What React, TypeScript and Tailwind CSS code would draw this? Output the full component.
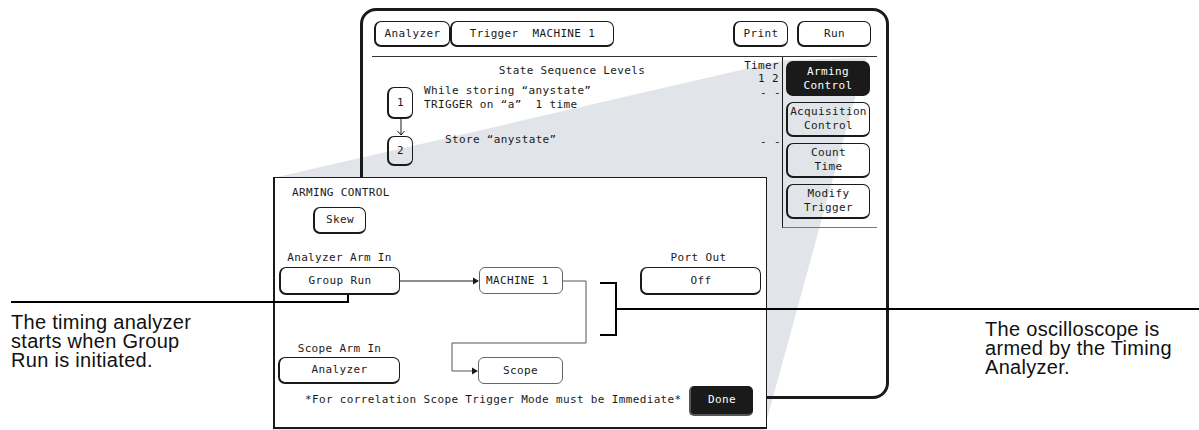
import type { ReactNode } from 'react';

const mono = "font-['DejaVu_Sans_Mono','Liberation_Mono',monospace] text-[11px] tracking-[0.35px] text-[#1a1a1a]";
const caption = "font-['Liberation_Sans',Arial,sans-serif] text-[#111] text-[20px] tracking-[0.3px] leading-[19px]";

// selectable softkey: thin top/right edge, heavy left/bottom "shadow" edge
function Key({ className, children }: { className: string; children: ReactNode }) {
  return (
    <div
      className={`flex items-center justify-center rounded-[7px] border border-[#1a1a1a] border-l-2 border-b-2 leading-[12px] text-center whitespace-pre ${className}`}
    >
      {children}
    </div>
  );
}

// non-selectable field
function Field({ className, children }: { className: string; children: ReactNode }) {
  return (
    <div className={`flex items-center rounded-[6px] border border-[#666] leading-[12px] ${className}`}>
      {children}
    </div>
  );
}

function Screen() {
  return (
    <div className={`absolute left-[360px] top-[8px] w-[529px] h-[391px] rounded-[16px] border-[3px] border-[#1a1a1a] ${mono}`}>
      {/* top menu row */}
      <div className="flex items-center pt-[10px] pl-[11px] pr-[15px]">
        <Key className="w-[76px] h-[26px] bg-white">Analyzer</Key>
        <Key className="w-[164px] h-[26px] bg-white">Trigger  MACHINE 1</Key>
        <Key className="ml-auto w-[55px] h-[26px] bg-white">Print</Key>
        <Key className="ml-[9px] w-[74px] h-[26px] bg-white">Run</Key>
      </div>
      <div className="mt-[9px] mx-[9px] border-t border-[#333]" />

      <div className="flex mx-[9px]">
        {/* sequence levels */}
        <div className="flex-1 flex flex-col">
          <div className="grid grid-cols-[1fr_auto_1fr]">
            <div />
            <div className="pt-[8px] mr-[10px] leading-[12px]">State Sequence Levels</div>
            <div className="justify-self-end pt-[2px] pr-[3px] text-right leading-[13px]">
              <div>Timer</div>
              <div>1 2</div>
            </div>
          </div>

          <div className="flex items-start pl-[15px] mt-[2px]">
            <Key className="w-[26px] h-[32px]">1</Key>
            <div className="ml-[11px] -mt-[3px] leading-[14px] whitespace-pre">
              <div>While storing “anystate”</div>
              <div>TRIGGER on “a”  1 time</div>
            </div>
            <div className="ml-auto pr-[1px] leading-[12px] whitespace-pre">- -</div>
          </div>

          <div className="pl-[24px] h-[17px]">
            <svg width="10" height="17" viewBox="0 0 10 17">
              <path d="M5 0 V16 M1.5 12 L5 16 L8.5 12" fill="none" stroke="#1a1a1a" strokeWidth="1" />
            </svg>
          </div>

          <div className="flex items-start pl-[15px]">
            <Key className="w-[26px] h-[30px]">2</Key>
            <div className="ml-[32px] -mt-[3px] leading-[14px] whitespace-pre">Store “anystate”</div>
            <div className="ml-auto pr-[1px] leading-[12px] whitespace-pre">- -</div>
          </div>
        </div>

        {/* softkey column */}
        <div className="w-[95px] flex flex-col gap-[6px] pt-[4px] pl-[3px] pb-[8px] border-l border-[#1a1a1a] border-b border-b-[#777]">
          <div className="w-[84px] h-[35px] flex flex-col items-center justify-center rounded-[7px] bg-[#1a1a1a] text-white leading-[14px]">
            <div>Arming</div>
            <div>Control</div>
          </div>
          <Key className="w-[84px] h-[35px] flex-col !leading-[14px]">
            <span>Acquisition</span>
            <span>Control</span>
          </Key>
          <Key className="w-[84px] h-[35px] flex-col !leading-[14px]">
            <span>Count</span>
            <span>Time</span>
          </Key>
          <Key className="w-[84px] h-[35px] flex-col !leading-[14px]">
            <span>Modify</span>
            <span>Trigger</span>
          </Key>
        </div>
      </div>
    </div>
  );
}

function ArmingPanel() {
  return (
    <div className={`absolute left-[273px] top-[177px] w-[494px] h-[252px] bg-white border border-[#1a1a1a] border-l-2 border-b-2 ${mono}`}>
      <div className="relative flex flex-col h-full">
        <div className="pl-[17px] pt-[9px] leading-[12px]">ARMING CONTROL</div>
        <Key className="ml-[38px] mt-[8px] w-[53px] h-[27px]">Skew</Key>

        <div className="flex mt-[18px] leading-[12px]">
          <div className="ml-[4px] w-[121px] text-center">Analyzer Arm In</div>
          <div className="ml-[79px] w-[84px]" />
          <div className="ml-[77px] w-[121px] text-center pr-[4px]">Port Out</div>
        </div>
        <div className="flex mt-[3px]">
          <Key className="ml-[4px] w-[121px] h-[28px]">Group Run</Key>
          <Field className="ml-[79px] w-[84px] h-[27px] pl-[6px]">MACHINE 1</Field>
          <Key className="ml-[77px] w-[121px] h-[28px]">Off</Key>
        </div>

        <div className="flex mt-[48px] leading-[12px]">
          <div className="ml-[4px] w-[121px] text-center">Scope Arm In</div>
        </div>
        <div className="flex mt-[2px]">
          <Key className="ml-[3px] w-[122px] h-[27px]">Analyzer</Key>
          <Field className="ml-[78px] w-[85px] h-[27px] justify-center">Scope</Field>
        </div>

        <div className="flex items-center mt-[2px]">
          <div className="ml-[30px] leading-[12px] -mt-[3px]">*For correlation Scope Trigger Mode must be Immediate*</div>
          <div className="ml-auto mr-[13px] w-[64px] h-[30px] flex items-center justify-center rounded-[5px] bg-[#1a1a1a] border-l-2 border-b-2 border-[#555] text-white leading-[12px]">
            Done
          </div>
        </div>

        {/* signal routing */}
        <svg className="absolute inset-0 pointer-events-none" width="492" height="250">
          <path d="M125 103 H198" stroke="#1a1a1a" strokeWidth="1" fill="none" />
          <path d="M198 99.5 L204 103 L198 106.5 Z" fill="#1a1a1a" />
          <path d="M288 103 H311 V165 H177 V193 H197" stroke="#555" strokeWidth="1" fill="none" />
          <path d="M197 189.5 L203 193 L197 196.5 Z" fill="#1a1a1a" />
        </svg>
      </div>
    </div>
  );
}

export default function App() {
  return (
    <div className="relative w-[1199px] h-[430px] bg-white overflow-hidden">
      {/* zoom wedge from the Arming Control key to the panel */}
      <svg className="absolute inset-0" width="1199" height="430">
        <polygon points="273,178 785,60 866,58 764,430 273,430" fill="#e1e4e8" />
      </svg>

      <Screen />
      <ArmingPanel />

      {/* callout leaders */}
      <svg className="absolute inset-0 pointer-events-none" width="1199" height="430">
        <path d="M11 302 H348 V295" stroke="#000" strokeWidth="2" fill="none" />
        <path d="M600 283 H616 V335 H600" stroke="#000" strokeWidth="2" fill="none" />
        <path d="M616 309 H1199" stroke="#000" strokeWidth="2" fill="none" />
      </svg>

      <div className={`absolute left-[11px] top-[313px] ${caption}`}>
        <div>The timing analyzer</div>
        <div>starts when Group</div>
        <div>Run is initiated.</div>
      </div>
      <div className={`absolute left-[985px] top-[320px] ${caption}`}>
        <div>The oscilloscope is</div>
        <div>armed by the Timing</div>
        <div>Analyzer.</div>
      </div>
    </div>
  );
}
